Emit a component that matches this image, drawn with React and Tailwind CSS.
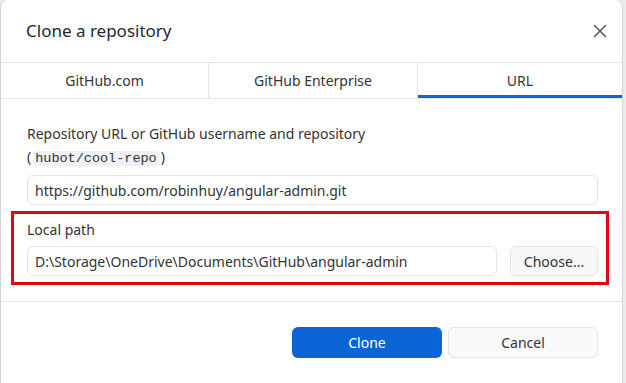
const font = { fontFamily: '"Noto Sans", "Open Sans", sans-serif' };

const CloseIcon = () => (
  <svg width="14" height="14" viewBox="0 0 14 14" fill="none">
    <path d="M1.5 1.5 L12.5 12.5 M12.5 1.5 L1.5 12.5" stroke="#555" strokeWidth="1.5" strokeLinecap="round" />
  </svg>
);

const tabs = ["GitHub.com", "GitHub Enterprise", "URL"];

export default function App() {
  return (
    <div className="w-[626px] h-[383px] bg-[#ececec] overflow-hidden">
      <div
        className="w-[623px] h-[383px] bg-white rounded-t-[8px] border-l border-r border-[#d4d4d4] flex flex-col text-[#24292f]"
        style={font}
      >
        {/* header */}
        <div className="h-[62px] flex items-center justify-between pl-[25px] pr-[15px]">
          <h1 className="text-[17px] leading-[24px] text-[#24292f]">Clone a repository</h1>
          <CloseIcon />
        </div>

        {/* tabs */}
        <div className="grid grid-cols-[208px_209px_1fr] h-[37px] border-t border-b border-[#e1e4e8]">
          {tabs.map((t, i) => (
            <div
              key={t}
              className={`relative flex items-center justify-center text-[14px] text-[#333] ${i < 2 ? "border-r border-[#e1e4e8]" : ""}`}
            >
              {t}
              {i === 2 && <div className="absolute left-0 right-0 bottom-0 h-[3px] bg-[#0a66d2]" />}
            </div>
          ))}
        </div>

        {/* body */}
        <div className="pl-[26px] pr-[24px] pt-[25px]">
          <div className="text-[14px] leading-[20px] text-[#333]">Repository URL or GitHub username and repository</div>
          <div className="text-[14px] leading-[20px] text-[#333] mt-[3px]">
            (
            <code
              className="mx-[2px] px-[2px] rounded-[4px] bg-[#eef2f7] text-[13.5px] text-[#333]"
              style={{ fontFamily: '"Liberation Mono", monospace' }}
            >
              hubot/cool-repo
            </code>
            )
          </div>
          <div className="mt-[6px] h-[30px] flex items-center rounded-[6px] border border-[#e1e4e8] pl-[7px] text-[14px] text-[#333]">
            https://github.com/robinhuy/angular-admin.git
          </div>

          <div className="mt-[6px] -ml-[16px] -mr-[11px] border-[3px] border-[#e30613] pl-[13px] pr-[8px] pt-[6px] pb-[6px]">
            <div className="text-[14px] leading-[20px] text-[#333]">Local path</div>
            <div className="mt-[6px] flex gap-[13px]">
              <div className="flex-1 h-[30px] flex items-center rounded-[6px] border border-[#e1e4e8] pl-[7px] text-[14px] text-[#333]">
                D:\Storage\OneDrive\Documents\GitHub\angular-admin
              </div>
              <button className="w-[88px] h-[30px] rounded-[6px] border border-[#e1e4e8] bg-[#f6f8fa] text-[14px] text-[#333]">
                Choose...
              </button>
            </div>
          </div>
        </div>

        {/* footer */}
        <div className="mt-[16px] border-t border-[#e1e4e8] pt-[25px] pr-[24px] flex justify-end gap-[6px]">
          <button className="w-[150px] h-[31px] rounded-[6px] bg-[#0a64d6] text-white text-[14px]">Clone</button>
          <button className="w-[150px] h-[31px] rounded-[6px] border border-[#e1e4e8] bg-[#f8fafc] text-[14px] text-[#333]">
            Cancel
          </button>
        </div>
      </div>
    </div>
  );
}
